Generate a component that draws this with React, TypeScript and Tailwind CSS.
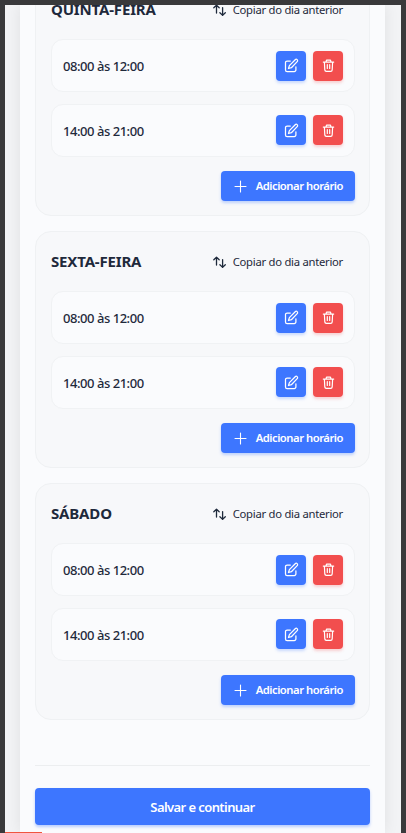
const DAYS = [
  { name: "QUINTA-FEIRA", slots: ["08:00 às 12:00", "14:00 às 21:00"] },
  { name: "SEXTA-FEIRA", slots: ["08:00 às 12:00", "14:00 às 21:00"] },
  { name: "SÁBADO", slots: ["08:00 às 12:00", "14:00 às 21:00"] },
];

const ICON_PROPS = {
  viewBox: "0 0 15 15",
  fill: "none",
  stroke: "currentColor",
  strokeLinecap: "round",
  strokeLinejoin: "round",
} as const;

function EditIcon() {
  return (
    <svg {...ICON_PROPS} strokeWidth={1.25} className="h-[15px] w-[15px]">
      <path d="M6.3 3H3.1A1.6 1.6 0 0 0 1.5 4.6v7.3a1.6 1.6 0 0 0 1.6 1.6h7.2a1.6 1.6 0 0 0 1.6-1.6V8.8" />
      <path d="M11.2 1.7a1.35 1.35 0 0 1 2 1.9L7.4 9.7l-2.9.8.9-2.9Z" />
    </svg>
  );
}

function TrashIcon() {
  return (
    <svg {...ICON_PROPS} strokeWidth={1.2} className="h-[15px] w-[15px]">
      <path d="M2.3 4.1h10.4M5 4l.5-1.8h4L10 4M3.4 4.2l.4 7.7a1.5 1.5 0 0 0 1.5 1.4h4.4a1.5 1.5 0 0 0 1.5-1.4l.4-7.7M6.3 6.6v3.9M8.7 6.6v3.9" />
    </svg>
  );
}

function SwapIcon() {
  return (
    <svg {...ICON_PROPS} strokeWidth={1.3} className="h-[15px] w-[15px]">
      <path d="M4.5 10V2.3M1.8 4.8l2.7-2.6 2.7 2.6M10.6 4.6v7.8M7.9 9.8l2.7 2.6 2.7-2.6" />
    </svg>
  );
}

function PlusIcon() {
  return (
    <svg {...ICON_PROPS} strokeWidth={1.1} className="h-[15px] w-[15px]">
      <path d="M7.5 2v11M2 7.5h11" />
    </svg>
  );
}

function SlotRow({ label }: { label: string }) {
  return (
    <div className="flex h-[53px] items-center justify-between rounded-xl border border-[#f0f2f4] bg-[#fafbfd] px-[11px]">
      <span className="pt-px text-[13px] leading-5 font-medium tracking-[-0.46px] text-[#1e293b]">{label}</span>
      <div className="flex gap-[7px]">
        <button className="flex h-[30px] w-[30px] items-center justify-center rounded bg-[#3d76ff] text-white shadow-[0_2px_3px_rgba(61,118,255,0.25)]">
          <EditIcon />
        </button>
        <button className="flex h-[30px] w-[30px] items-center justify-center rounded bg-[#f24e4e] text-white shadow-[0_2px_3px_rgba(242,78,78,0.25)]">
          <TrashIcon />
        </button>
      </div>
    </div>
  );
}

function DayCard({ name, slots }: { name: string; slots: string[] }) {
  return (
    <section className="h-[237px] shrink-0 rounded-2xl border border-[#eff1f3] bg-[#f7f8fa] pt-[15px] pr-[14px] pl-[15px]">
      <div className="mb-[14px] flex h-[30px] items-center justify-between">
        <h2 className="pb-px text-[15px] font-bold tracking-[-0.17px] text-[#1e293b]">{name}</h2>
        <button className="flex items-center gap-[6px] pt-px pr-3 text-[11.25px] tracking-[-0.26px] text-[#1e293b]">
          <SwapIcon />
          Copiar do dia anterior
        </button>
      </div>
      <div className="flex flex-col gap-[11.5px]">
        {slots.map((slot) => (
          <SlotRow key={slot} label={slot} />
        ))}
      </div>
      <div className="mt-[14px] flex justify-end">
        <button className="flex h-[30px] w-[134px] items-center justify-end gap-2 rounded bg-[#3d76ff] pt-px pr-3 text-[11.25px] font-semibold tracking-[-0.48px] text-white shadow-[0_2px_3px_rgba(61,118,255,0.3)]">
          <PlusIcon />
          Adicionar horário
        </button>
      </div>
    </section>
  );
}

export default function App() {
  return (
    <div className="relative h-[833px] w-[406px] overflow-hidden bg-[#39393b] px-[5px] pt-[5px] font-['Noto_Sans',sans-serif]">
      <div className="h-[828px] overflow-hidden bg-[#f2f3f5] pr-4 pl-[15px]">
        <main className="flex h-full flex-col bg-[#fafbfd] px-[15px] shadow-[0_0_14px_rgba(0,0,0,0.08)]">
          <div className="-mt-[26px] flex flex-col gap-[15px]">
            {DAYS.map((day) => (
              <DayCard key={day.name} {...day} />
            ))}
          </div>
          <div className="mt-[45px] border-t border-[#eceef0] pt-[22px]">
            <button className="h-[37px] w-full rounded bg-[#3d76ff] pt-0.5 text-[13px] font-semibold tracking-[-0.58px] text-white shadow-[0_2px_3px_rgba(61,118,255,0.35)]">
              Salvar e continuar
            </button>
          </div>
        </main>
      </div>
      <div className="absolute bottom-0 left-[5px] h-px w-[37px] bg-[#f0553f]" />
    </div>
  );
}
